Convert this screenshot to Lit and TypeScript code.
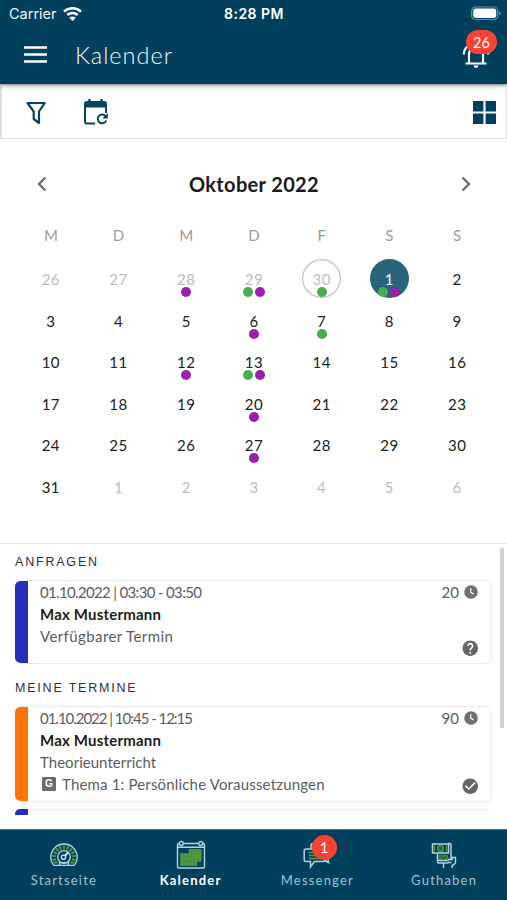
import { LitElement, html, css, svg, nothing } from "lit";
import { customElement, property } from "lit/decorators.js";
import { classMap } from "lit/directives/class-map.js";

type Dot = "g" | "p";
interface Day { n: number; out?: boolean; ring?: boolean; sel?: boolean; dots?: Dot[]; }

const marks: Record<number, Dot[]> = {
  2: ["p"], 3: ["g", "p"], 4: ["g"], 5: ["g", "p"],
  10: ["p"], 11: ["g"], 16: ["p"], 17: ["g", "p"], 24: ["p"], 31: ["p"],
};

const days: Day[] = Array.from({ length: 42 }, (_, i) => {
  const out = i < 5 || i > 35;
  const n = i < 5 ? 26 + i : i > 35 ? i - 35 : i - 4;
  return { n, out, ring: i === 4, sel: i === 5, dots: marks[i] };
});

const clock = html`<svg class="clock" viewBox="0 0 14 14"><circle cx="7" cy="7" r="6.8" fill="#707070"/><path d="M6.8 3.2v4.1l3 1.8" fill="none" stroke="#fff" stroke-width="1.2"/></svg>`;
const question = html`<svg class="state" viewBox="0 0 24 24"><path fill="#666" d="M12 2C6.48 2 2 6.48 2 12s4.48 10 10 10 10-4.48 10-10S17.52 2 12 2zm1 17h-2v-2h2v2zm2.07-7.75-.9.92C13.45 12.9 13 13.5 13 15h-2v-.5c0-1.1.45-2.1 1.17-2.83l1.24-1.26c.37-.36.59-.86.59-1.41 0-1.1-.9-2-2-2s-2 .9-2 2H8c0-2.21 1.79-4 4-4s4 1.79 4 4c0 .88-.36 1.68-.93 2.25z"/></svg>`;
const check = html`<svg class="state" viewBox="0 0 24 24"><path fill="#666" d="M12 2C6.48 2 2 6.48 2 12s4.48 10 10 10 10-4.48 10-10S17.52 2 12 2zm-2 15-5-5 1.41-1.41L10 14.17l7.59-7.59L19 8l-9 9z"/></svg>`;

const ticks = Array.from({ length: 11 }, (_, i) => {
  const a = Math.PI * (0.93 + (i * 1.14) / 10);
  const p = (r: number) => `${(14 + r * Math.cos(a)).toFixed(2)} ${(14.5 + r * Math.sin(a)).toFixed(2)}`;
  return svg`<path d="M${p(8.2)}L${p(11.9)}" stroke="#559b3c" stroke-width="2"/>`;
});
const gauge = html`<svg width="28" height="24" viewBox="0 0 28 24" fill="none">
  <path d="M4 22.4h20c2.1-2.1 3.2-5 3.2-8C27.2 7 21.3 1 14 1S.8 7 .8 14.4c0 3 1.1 5.9 3.2 8z" stroke="#b5d4de" stroke-width="1.3"/>
  ${ticks}
  <path d="M3.500 19.500h4M20.500 19.500h4" stroke="#559b3c" stroke-width="1.800"/>
  <circle cx="14" cy="14" r="6.300" stroke="#b5d4de" stroke-width="1.300"/>
  <circle cx="13.500" cy="14.300" r="2.100" stroke="#d9edf3" stroke-width="1.300"/>
  <path d="M14.800 13l3.200-3.300" stroke="#d9edf3" stroke-width="1.800"/>
  <path d="M9.500 22v-2.300h9V22" stroke="#b5d4de" stroke-width="1.300"/>
</svg>`;

const cells = [[2, 3, 4], [0, 1, 2, 3, 4], [0, 1, 2, 3, 4], [0, 1, 2, 3]].flatMap((r, y) =>
  r.map((x) => svg`<rect x=${4.6 + x * 4.2} y=${9.3 + y * 4.2} width="3.800" height="3.800" fill="#4f9636" stroke="#6aa957" stroke-width=".4"/>`));
const calendar = html`<svg width="30" height="30" viewBox="0 0 30 30" fill="none">
  <path d="M3 3.500h24q1.500 0 1.500 1.500v21.500q0 1.500-1.500 1.500H3q-1.500 0-1.500-1.500V5q0-1.500 1.500-1.500zM1.500 7.200h27" stroke="#b5d4de" stroke-width="1.400"/>
  <circle cx="5.300" cy="3.500" r="2" fill="#00405c" stroke="#b5d4de" stroke-width="1.300"/>
  <circle cx="24.700" cy="3.500" r="2" fill="#00405c" stroke="#b5d4de" stroke-width="1.300"/>
  ${cells}
</svg>`;
const chat = html`<svg width="28" height="27" viewBox="0 0 28 27" fill="none">
  <path d="M8 6.500V3.500q0-2 2-2h13q2 0 2 2v15l.5 2-5-2.500" stroke="#b5d4de" stroke-width="1.500"/>
  <path d="M3 7H20q1.500 0 1.500 1.500v9.500q0 1.500-1.500 1.500h-8.500L7.500 25v-5.500H3Q1.200 19.500 1.200 18V9Q1.200 7 3 7z" fill="#00405c" stroke="#b5d4de" stroke-width="1.500"/>
  <path d="M6 10.500h13M6 13.500h13M6 16.500h13" stroke="#559b3c" stroke-width="1.700"/>
</svg>`;
const money = html`<svg width="26" height="27" viewBox="0 0 26 27" fill="none">
  <path d="M17 1.500h1.500q1.500 0 1.500 1.500v14M6.500 12v7.500q0 1.500 1.500 1.500h9" stroke="#b5d4de" stroke-width="1.500"/>
  <rect x="1.500" y="2" width="16" height="9" stroke="#b5d4de" stroke-width="1.500"/>
  <path d="M3.500 3.500v6M15.500 3.500v6" stroke="#559b3c" stroke-width="1.200"/>
  <circle cx="9.500" cy="6.500" r="3.200" fill="#35802f" stroke="#6aa957"/>
  <path d="M10.300 5q-1.800-.6-1.800.6c0 1 1.900.7 1.900 1.700 0 1.200-2 .8-2 .4" stroke="#00405c" stroke-width=".8"/>
  <rect x="8" y="12.800" width="9" height="4.700" fill="#3c8633"/>
  <path d="M10 14.300l2.500 2.200 2.500-2.200" stroke="#00405c"/>
  <path d="M6.500 18.500h11M17 17.500h4.200V15.500h3.300V20q0 2-1.800 2.500T21 26M17 20.500h3.500M12.500 21v2.500V26" stroke="#b5d4de" stroke-width="1.400"/>
</svg>`;

@customElement("calendar-day")
class CalendarDay extends LitElement {
  @property({ attribute: false }) day!: Day;
  static styles = css`
    :host { display: flex; justify-content: center; height: 41.5px; }
    .day { position: relative; box-sizing: border-box; width: 39px; height: 39px; border-radius: 50%;
      display: flex; justify-content: center; font: 15px/40px Lato, sans-serif; letter-spacing: .5px; color: #202020; }
    .out { color: #bdbdbd; }
    .ring { box-shadow: inset 0 0 0 1.3px #c4c4c4; }
    .sel { background: #2a637c; color: #fff; }
    .dots { position: absolute; left: 0; right: 0; top: 28px; display: flex; justify-content: center; gap: 2px; }
    .dot { width: 10px; height: 10px; border-radius: 50%; }
    .g { background: #48ad50; }
    .p { background: #9820ab; }
  `;
  render() {
    const d = this.day;
    return html`<div class=${classMap({ day: true, out: !!d.out, ring: !!d.ring, sel: !!d.sel })}>
      <span>${d.n}</span>
      ${d.dots ? html`<div class="dots">${d.dots.map((k) => html`<i class="dot ${k}"></i>`)}</div>` : nothing}
    </div>`;
  }
}

@customElement("appointment-card")
class AppointmentCard extends LitElement {
  @property() when = "";
  @property() kind = "";
  @property() topic = "";
  @property() minutes = "";
  @property() tone = "blue";
  static styles = css`
    :host { display: block; }
    .card { box-sizing: border-box; display: flex; height: 84px; border: 1px solid #ebebeb; border-left: 0;
      border-radius: 6px; font: 15px/22px Lato, sans-serif; color: #5c5c5c; overflow: hidden; background: #fff; }
    .tall { height: 96px; }
    .bar { width: 13px; margin: -1px 0; flex: none; border-radius: 5px 0 0 5px; }
    .blue { background: #2430b9; }
    .orange { background: #ff7300; }
    .text { flex: 1; padding-left: 12px; white-space: nowrap; }
    .when { letter-spacing: -.66px; }
    .tall .when { letter-spacing: -1.020px; }
    .name { font-weight: 700; color: #1c1c1c; letter-spacing: .200px; }
    .kind { letter-spacing: .4px; }
    .tall .kind { letter-spacing: .030px; }
    .topic { display: flex; align-items: center; gap: 6px; letter-spacing: .170px; }
    .side { display: flex; flex-direction: column; justify-content: space-between; align-items: flex-end; padding: 0 13px 6px 0; }
    .mins { display: flex; align-items: center; gap: 5px; }
    .clock { width: 14px; height: 14px; display: block; }
    .state { width: 18.500px; height: 18.500px; display: block; margin-right: -1px; }
    .g { width: 14px; height: 14px; margin-left: 2px; border-radius: 1.500px; background: #6b6b6b; color: #fff;
      font: 700 10px/14px "Liberation Sans", sans-serif; text-align: center; }
  `;
  render() {
    return html`<div class="card ${this.topic ? "tall" : ""}">
      <div class="bar ${this.tone}"></div>
      <div class="text">
        <div class="when">${this.when}</div>
        <div class="name">Max Mustermann</div>
        <div class="kind">${this.kind}</div>
        ${this.topic ? html`<div class="topic"><span class="g">G</span><span>${this.topic}</span></div>` : nothing}
      </div>
      <div class="side">
        <div class="mins"><span>${this.minutes}</span>${clock}</div>
        ${this.topic ? check : question}
      </div>
    </div>`;
  }
}

@customElement("app-root")
class AppRoot extends LitElement {
  static styles = css`
    :host { display: flex; flex-direction: column; width: 507px; height: 900px; overflow: hidden; background: #fff; font-family: Lato, sans-serif; }
    svg { display: block; flex: none; }
    .top { height: 84px; flex: none; background: #00405c; color: #eef5f8; box-shadow: 0 1px 5px rgba(0,0,0,.5); z-index: 1; }
    .status { display: grid; grid-template-columns: 1fr auto 1fr; height: 27px; align-items: center; padding: 0 6px 0 9px; font: 14.500px/27px Inter, sans-serif; }
    .carrier { display: flex; align-items: center; gap: 6px; }
    .time { font-weight: 600; letter-spacing: .5px; color: #fff; font-size: 14px; margin-right: 2px; }
    .battery { justify-self: end; }
    .bar { display: flex; align-items: center; height: 57px; padding: 0 17px 2px 24px; box-sizing: border-box; }
    .title { flex: 1; padding-left: 28px; font-size: 23.500px; font-weight: 300; letter-spacing: 1px; color: #f2f8fa; }
    .bell { position: relative; }
    .count { position: absolute; left: 4px; top: -11px; width: 31px; height: 24px; border-radius: 12px; background: #f74336; color: #fff; font-size: 14.500px; line-height: 25px; text-align: center; }
    .tools { box-sizing: border-box; height: 55px; flex: none; border: 1px solid #e0e0e0; border-left: 2px solid #dedede; display: flex; align-items: center; padding: 2px 10px 0 22px; }
    .date { flex: 1; padding-left: 34px; }
    .cal { height: 405px; flex: none; border-bottom: 1px solid #e8e8e8; box-sizing: border-box; }
    .month { height: 89px; display: flex; align-items: center; justify-content: space-between; padding: 0 35px 0 36px; box-sizing: border-box; font-size: 20px; font-weight: 700; letter-spacing: .35px; color: #1a1a1a; }
    .week, .days { display: grid; grid-template-columns: repeat(7, 1fr); padding: 0 16px 0 17px; }
    .week { height: 31px; align-items: start; line-height: 15px; text-align: center; font-size: 15px; color: #9b9b9b; }
    .list { flex: 1; min-height: 0; position: relative; }
    .inner { height: 271px; box-sizing: border-box; padding: 0 15px; }
    .head { height: 36px; box-sizing: border-box; font: 12.500px/37px "Liberation Sans", sans-serif; letter-spacing: 1.800px; color: #303030; }
    .second { height: 42px; line-height: 48px; }
    .peek { box-sizing: border-box; height: 6px; margin-top: 7px; border-top: 1px solid #ebebeb; border-right: 1px solid #ebebeb; border-radius: 5px 5px 0 0; display: flex; }
    .peek-bar { width: 13px; height: 6px; margin-top: -1px; border-radius: 5px 0 0 0; background: #2430b9; }
    .scroll { position: absolute; right: 3px; top: 4px; width: 4px; height: 180px; background: #d2d2d2; }
    .nav { height: 71px; flex: none; box-sizing: border-box; border-top: 1px solid #47788d; background: #00405c; display: grid; grid-template-columns: repeat(4, 1fr); color: #9fc3d0; font-size: 13px; letter-spacing: 1.200px; }
    .item { display: flex; flex-direction: column; align-items: center; position: relative; padding: 10px 0 0 1px; }
    .icon { height: 30px; display: flex; align-items: center; }
    .label { line-height: 20px; }
    .on { color: #fff; font-weight: 700; }
    .one { position: absolute; left: 58px; top: 5px; width: 25px; height: 25px; border-radius: 50%; background: #f74336; color: #fff; font-size: 15px; letter-spacing: 0; line-height: 25px; text-align: center; }
  `;
  render() {
    return html`
      <div class="top">
        <div class="status">
          <div class="carrier"><span>Carrier</span>
            <svg width="19" height="14" viewBox="0 0 19 14" fill="none" stroke="#fff" stroke-width="2.500"><path d="M1 4.700a12.300 12.300 0 0 1 17 0M4.300 8a7.700 7.700 0 0 1 10.400 0"/><path d="M9.500 14 6.300 10.700a4.600 4.600 0 0 1 6.400 0z" fill="#fff" stroke="none"/></svg>
          </div>
          <span class="time">8:28 PM</span>
          <svg class="battery" width="30" height="15" viewBox="0 0 30 15"><rect x=".7" y="1" width="26" height="12.500" rx="3.800" fill="none" stroke="#708f9c" stroke-width="1.200"/><rect x="2.200" y="2.600" width="23" height="9.400" rx="2.400" fill="#fff"/><path d="M28 5.300q1.700.5 1.700 2T28 9.300z" fill="#708f9c"/></svg>
        </div>
        <div class="bar">
          <svg width="23" height="17" viewBox="0 0 23 17"><path d="M0 1.500h23M0 8.500h23M0 15.500h23" stroke="#fff" stroke-width="2.500"/></svg>
          <div class="title">Kalender</div>
          <div class="bell">
            <svg width="28" height="28" viewBox="0 0 28 28" fill="none" stroke="#fff" stroke-width="2.200"><path d="M3.500 22.500h21M7 22V13.500q0-7 7-7t7 7V22M1.800 13.500q0-5 3.700-8M26.200 13.500q0-5-3.700-8"/><path d="M11.500 24.500h5q-.3 2.400-2.500 2.400t-2.500-2.400z" fill="#fff" stroke="none"/></svg>
            <span class="count">26</span>
          </div>
        </div>
      </div>
      <div class="tools">
        <svg width="25" height="26" viewBox="0 0 25 26" fill="none" stroke="#07445f" stroke-width="2.200"><path d="M3.500 3h17.300L15 11.500V23l-5.300-4v-7.500z" stroke-linejoin="round"/></svg>
        <div class="date"><svg width="26" height="27" viewBox="0 0 26 27" fill="none" stroke="#07445f" stroke-width="2"><path d="M12 24.500H4q-2 0-2-2V5q0-2 2-2h17q2 0 2 2v9"/><path d="M2 3h21v5.500H2z" fill="#07445f" stroke="none"/><path d="M6.500 0v4M18.500 0v4" stroke-width="2.400"/><path d="M22.800 17.300a4.400 4.400 0 1 0 .5 4.200"/><path d="M24.800 14v5.500h-5.500z" fill="#07445f" stroke="none"/></svg></div>
        <svg width="23" height="23" viewBox="0 0 23 23" fill="#00405c"><path d="M0 0h10.400v10.400H0zM12.600 0H23v10.400H12.600zM0 12.600h10.400V23H0zM12.600 12.600H23V23H12.600z"/></svg>
      </div>
      <div class="cal">
        <div class="month">
          <svg width="12" height="16" viewBox="0 0 12 16" fill="none" stroke="#686868" stroke-width="2.200"><path d="M9.500 1.500 3 8l6.500 6.500"/></svg>
          <span>Oktober 2022</span>
          <svg width="12" height="16" viewBox="0 0 12 16" fill="none" stroke="#686868" stroke-width="2.200"><path d="M2.500 1.500 9 8l-6.500 6.500"/></svg>
        </div>
        <div class="week">${["M", "D", "M", "D", "F", "S", "S"].map((d) => html`<span>${d}</span>`)}</div>
        <div class="days">${days.map((d) => html`<calendar-day .day=${d}></calendar-day>`)}</div>
      </div>
      <div class="list">
        <div class="inner">
          <div class="head">ANFRAGEN</div>
          <appointment-card when="01.10.2022 | 03:30 - 03:50" kind="Verfügbarer Termin" minutes="20"></appointment-card>
          <div class="head second">MEINE TERMINE</div>
          <appointment-card when="01.10.2022 | 10:45 - 12:15" kind="Theorieunterricht" topic="Thema 1: Persönliche Voraussetzungen" minutes="90" tone="orange"></appointment-card>
          <div class="peek"><div class="peek-bar"></div></div>
        </div>
        <div class="scroll"></div>
      </div>
      <div class="nav">
        <div class="item"><div class="icon">${gauge}</div><span class="label">Startseite</span></div>
        <div class="item on"><div class="icon">${calendar}</div><span class="label">Kalender</span></div>
        <div class="item"><div class="icon">${chat}</div><span class="label">Messenger</span><span class="one">1</span></div>
        <div class="item"><div class="icon">${money}</div><span class="label">Guthaben</span></div>
      </div>`;
  }
}
